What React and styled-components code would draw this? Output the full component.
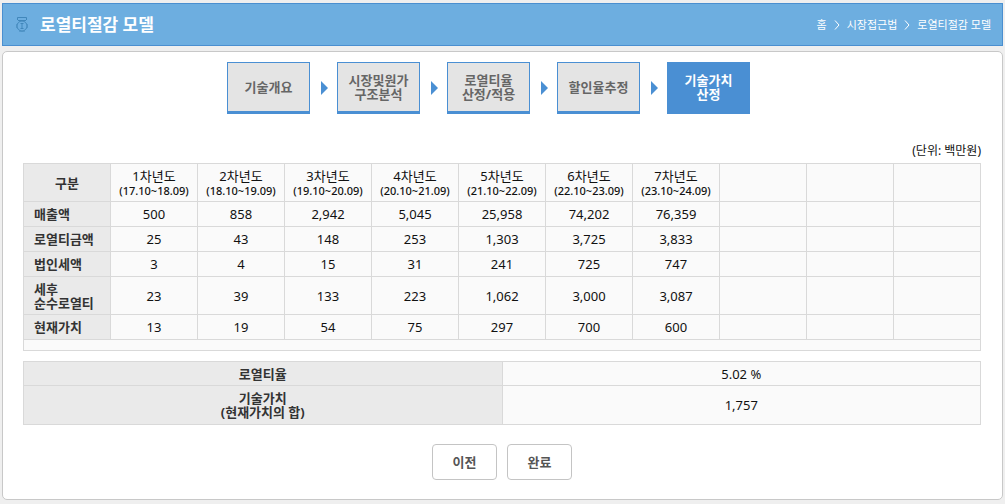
import React from 'react';
import styled, { createGlobalStyle } from 'styled-components';

const GlobalStyle = createGlobalStyle`
  *, *::before, *::after { box-sizing: border-box; }
  body {
    margin: 0;
    background: #efefef;
    color: #111;
    font: 13px/14px "Noto Sans", "Noto Sans CJK KR", sans-serif;
  }
`;

const Page = styled.div`
  padding: 3px 2px;
`;

const TitleBar = styled.header`
  display: flex;
  align-items: center;
  height: 43px;
  padding: 0 11px 0 12px;
  background: #6daee0;
  border: 1px solid #4a8fd0;
  color: #fff;
`;

const Title = styled.h1`
  margin: 0 auto 0 11px;
  font-size: 17px;
  line-height: 24px;
  font-weight: 700;
`;

const Crumbs = styled.nav`
  display: flex;
  align-items: center;
  gap: 7px;
  font-size: 11px;
`;

const Crumb = styled.a`
  color: #fff;
  text-decoration: none;
`;

const Panel = styled.main`
  margin-top: 5px;
  padding: 10px 21px 19px 20px;
  background: #fff;
  border: 1px solid #c8c8c8;
  border-radius: 5px;
`;

const Steps = styled.ol`
  display: flex;
  justify-content: center;
  margin: 0;
  padding: 0;
  list-style: none;
`;

const StepItem = styled.li`
  display: flex;
  align-items: center;
  width: 110px;
`;

const Step = styled.button`
  width: 83px;
  height: 52px;
  padding: 0;
  border: 1px solid #4a8fd3;
  border-bottom-width: 3px;
  background: ${(p) => (p.$active ? '#4a8fd3' : '#e4e4e4')};
  color: ${(p) => (p.$active ? '#fff' : '#666')};
  font: inherit;
  font-weight: 700;
  white-space: pre-line;
`;

const Arrow = styled.svg`
  margin-left: 11px;
  fill: #4a8fd3;
`;

const Unit = styled.p`
  margin: 30px 0 5px;
  font-size: 12px;
  text-align: right;
`;

const Table = styled.table`
  width: 100%;
  border-collapse: collapse;
  table-layout: fixed;
  margin-bottom: ${(p) => p.$gap}px;
`;

const Row = styled.tr`
  height: ${(p) => p.$height}px;
`;

const Label = styled.th`
  padding: 0 0 0 ${(p) => (p.$left ? 10 : 0)}px;
  border: 1px solid #d9d9d9;
  background: #eaeaea;
  color: #333;
  text-align: ${(p) => (p.$left ? 'left' : 'center')};
  white-space: pre-line;
`;

const Year = styled.th`
  padding: 0;
  border: 1px solid #d9d9d9;
  background: #fafafa;
  font-weight: 400;
  line-height: 16px;
`;

const Period = styled.span`
  display: block;
  font-size: 11px;
  line-height: 14px;
  font-weight: 500;
`;

const Value = styled.td`
  padding: 0;
  border: 1px solid #d9d9d9;
  background: #fafafa;
  text-align: center;
`;

const Actions = styled.div`
  display: flex;
  justify-content: center;
  gap: 10px;
`;

const Button = styled.button`
  width: 65px;
  height: 36px;
  padding: 0;
  border: 1px solid #c4c4c4;
  border-radius: 4px;
  background: #fff;
  color: #555;
  font: inherit;
  font-weight: 700;
`;

const steps = ['기술개요', '시장및원가\n구조분석', '로열티율\n산정/적용', '할인율추정', '기술가치\n산정'];

const years = [
  '17.10~18.09', '18.10~19.09', '19.10~20.09', '20.10~21.09',
  '21.10~22.09', '22.10~23.09', '23.10~24.09', '', '', '',
];

const rows = [
  { label: '매출액', height: 25, values: ['500', '858', '2,942', '5,045', '25,958', '74,202', '76,359'] },
  { label: '로열티금액', height: 25, values: ['25', '43', '148', '253', '1,303', '3,725', '3,833'] },
  { label: '법인세액', height: 25, values: ['3', '4', '15', '31', '241', '725', '747'] },
  { label: '세후\n순수로열티', height: 38, values: ['23', '39', '133', '223', '1,062', '3,000', '3,087'] },
  { label: '현재가치', height: 25, values: ['13', '19', '54', '75', '297', '700', '600'] },
];

function MedalIcon() {
  return (
    <svg width="14" height="18" viewBox="0 0 14 18" fill="none" stroke="#4187bb" aria-hidden="true">
      <path d="M2.5 4V1.5h9V4M3 4.5h8" />
      <circle cx="7" cy="10" r="5" />
      <path d="M5.5 7.5h3M7 7.5v5M5.5 12.5h3" />
      <path d="M1.5 8v4M12.5 8v4M4 15.5h6" opacity="0.5" />
    </svg>
  );
}

function Chevron() {
  return (
    <svg width="6" height="10" viewBox="0 0 6 10" fill="none" stroke="#fff" aria-hidden="true">
      <path d="M1 0.5l4 4.5-4 4.5" />
    </svg>
  );
}

export default function App() {
  return (
    <>
      <GlobalStyle />
      <Page>
        <TitleBar>
          <MedalIcon />
          <Title>로열티절감 모델</Title>
          <Crumbs>
            <Crumb href="#home">홈</Crumb>
            <Chevron />
            <Crumb href="#market">시장접근법</Crumb>
            <Chevron />
            <Crumb href="#royalty">로열티절감 모델</Crumb>
          </Crumbs>
        </TitleBar>
        <Panel>
          <Steps>
            {steps.map((name, i) => (
              <StepItem key={name}>
                <Step type="button" $active={i === steps.length - 1}>{name}</Step>
                {i < steps.length - 1 && (
                  <Arrow width="7" height="14" viewBox="0 0 7 14" aria-hidden="true">
                    <path d="M0 0l7 7-7 7z" />
                  </Arrow>
                )}
              </StepItem>
            ))}
          </Steps>
          <Unit>(단위: 백만원)</Unit>
          <Table $gap={10}>
            <thead>
              <Row $height={38}>
                <Label scope="col">구분</Label>
                {years.map((period, i) => (period ? (
                  <Year scope="col" key={i}>
                    {`${i + 1}차년도`}
                    <Period>{`(${period})`}</Period>
                  </Year>
                ) : <Value key={i} />))}
              </Row>
            </thead>
            <tbody>
              {rows.map((row) => (
                <Row key={row.label} $height={row.height}>
                  <Label scope="row" $left>{row.label}</Label>
                  {years.map((_, i) => <Value key={i}>{row.values[i]}</Value>)}
                </Row>
              ))}
              <Row $height={11}><Value colSpan={11} /></Row>
            </tbody>
          </Table>
          <Table $gap={19}>
            <tbody>
              <Row $height={24}>
                <Label scope="row">로열티율</Label>
                <Value>5.02 %</Value>
              </Row>
              <Row $height={39}>
                <Label scope="row">{'기술가치\n(현재가치의 합)'}</Label>
                <Value>1,757</Value>
              </Row>
            </tbody>
          </Table>
          <Actions>
            <Button type="button">이전</Button>
            <Button type="button">완료</Button>
          </Actions>
        </Panel>
      </Page>
    </>
  );
}
